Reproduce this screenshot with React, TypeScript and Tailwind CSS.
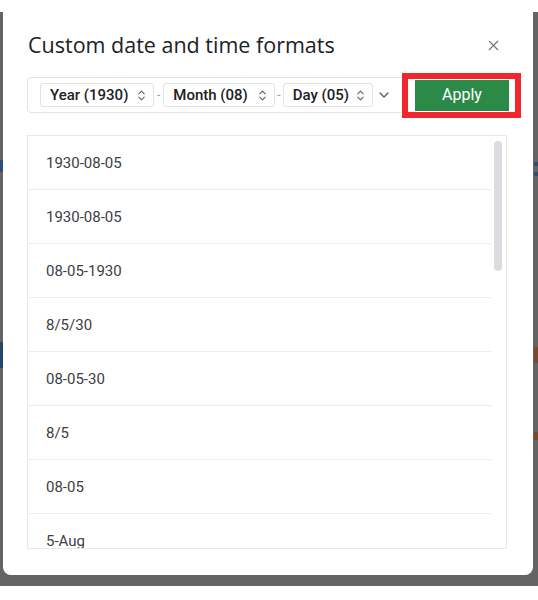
import React from 'react';
import { ChevronsUpDown, ChevronDown, X } from 'lucide-react';

const formats = ['1930-08-05', '1930-08-05', '08-05-1930', '8/5/30', '08-05-30', '8/5', '08-05', '5-Aug'];

const Part: React.FC<{ label: string; width: string }> = ({ label, width }) => (
  <div className={`flex h-[24px] ${width} items-center justify-between rounded-[3px] border border-[#e3e3e3] pl-[9px] pr-[5px]`}>
    <span className="text-[15px] font-medium text-[#202124]">{label}</span>
    <ChevronsUpDown className="h-[13px] w-[13px] text-[#5f6368]" strokeWidth={2} />
  </div>
);

const Dash = () => <span className="mx-[3px] text-[12px] text-[#9aa0a6]">-</span>;

export default function App() {
  return (
    <div className="relative h-[600px] w-[538px] overflow-hidden bg-white" style={{ fontFamily: 'Roboto, "Liberation Sans", sans-serif' }}>
      {/* dimmed page behind the dialog */}
      <div className="absolute left-0 top-[12px] h-[574px] w-[538px] bg-[#646464]">
        <div className="absolute left-0 top-[148px] h-[12px] w-[3px] bg-[#2c4f78]" />
        <div className="absolute left-0 top-[330px] h-[26px] w-[3px] bg-[#24476e]" />
        <div className="absolute right-0 top-[150px] h-[4px] w-[4px] bg-[#2c4f78]" />
        <div className="absolute right-0 top-[160px] h-[4px] w-[4px] bg-[#2c4f78]" />
        <div className="absolute right-0 top-[335px] h-[16px] w-[4px] bg-[#7a4a2a]" />
        <div className="absolute right-0 top-[420px] h-[8px] w-[4px] bg-[#7a4a2a]" />
      </div>

      <div className="relative ml-[3px] flex h-[575px] w-[530px] flex-col rounded-b-[8px] bg-white pl-[24px] pr-[23px]">
        <div className="flex h-[77px] items-start justify-between pt-[30px]">
          <h1 className="ml-[1px] text-[21.5px] leading-[30px] text-[#202124]" style={{ fontFamily: '"Open Sans", sans-serif' }}>
            Custom date and time formats
          </h1>
          <X className="mr-[8px] mt-[7px] h-[17px] w-[17px] text-[#6f7378]" strokeWidth={1.6} />
        </div>

        <div className="flex h-[36px] w-[482px] items-center rounded-[4px] border border-[#e3e3e3] pl-[12px]">
          <Part label="Year (1930)" width="w-[114px]" />
          <Dash />
          <Part label="Month (08)" width="w-[112px]" />
          <span className="mx-[2px] text-[12px] text-[#9aa0a6]">-</span>
          <Part label="Day (05)" width="w-[90px]" />
          <ChevronDown className="ml-[3px] h-[16px] w-[16px] text-[#5f6368]" strokeWidth={2.2} />
          <button className="ml-auto -mr-[1px] flex h-[31px] w-[94px] items-center justify-center bg-[#2b8a48] text-[16px] text-white">
            Apply
          </button>
        </div>

        <div className="relative mt-[22px] h-[414px] w-[480px] overflow-hidden border border-[#e8e8e8]">
          {formats.map((f, i) => (
            <div key={i} className="flex h-[54px] w-[463px] items-center border-b border-[#ececec] pl-[18px] pt-[1px] text-[15px] text-[#3c4043]">
              {f}
            </div>
          ))}
          <div className="absolute right-[4px] top-[5px] h-[130px] w-[8px] rounded-full bg-[#dadce0]" />
        </div>
      </div>

      {/* annotation */}
      <div className="absolute left-[402px] top-[73px] h-[45px] w-[119px] border-[6px] border-[#f2262d]" />
    </div>
  );
}
